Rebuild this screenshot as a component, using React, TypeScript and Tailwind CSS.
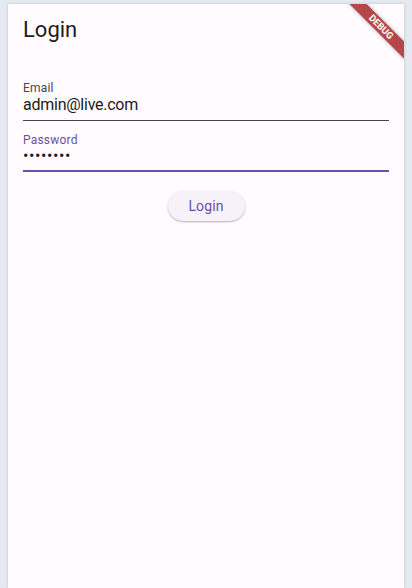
import React from "react";

export default function App() {
  return (
    <div
      className="w-[412px] h-[588px] bg-[#e5eaf2] px-[8px] pt-[4px] overflow-hidden"
      style={{ fontFamily: "Roboto, 'Noto Sans', sans-serif" }}
    >
      <div className="relative h-[584px] bg-[#fffbfe] overflow-hidden shadow-[0_0_3px_rgba(0,0,0,0.18)]">
        {/* App bar */}
        <div className="h-[56px] px-[15px] pt-[12px]">
          <div className="text-[22px] leading-[28px] text-[#1d1b20]">Login</div>
        </div>

        {/* Body */}
        <div className="px-[15px] flex flex-col">
          {/* Email field */}
          <div className="mt-[21px] border-b border-[#49454f]">
            <div className="h-[14px] text-[12px] leading-[14px] text-[#49454f] tracking-[0.2px]">Email</div>
            <div className="h-[16px] mt-[2px] text-[16px] leading-[16px] text-[#1d1b20] tracking-[-0.25px]">admin@live.com</div>
            <div className="h-[7px]" />
          </div>

          {/* Password field */}
          <div className="mt-[12px] border-b-2 border-[#6750a4]">
            <div className="h-[14px] text-[12px] leading-[14px] text-[#6750a4] tracking-[0.2px]">Password</div>
            <div className="h-[16px] mt-[1px] text-[16px] leading-[16px] text-[#1d1b20] tracking-[0.6px]">••••••••</div>
            <div className="h-[6px]" />
          </div>

          {/* Button */}
          <div className="mt-[19px] flex justify-center">
            <button className="h-[30px] w-[77px] rounded-full bg-[#f7f2fa] text-[#6750a4] text-[14px] font-normal tracking-[0.1px] shadow-[0_1px_2px_rgba(0,0,0,0.3)]">
              Login
            </button>
          </div>
        </div>

        {/* Debug banner */}
        <div className="absolute right-[-17px] top-[17px] w-[80px] h-[12px] rotate-45 bg-[#b5474a] shadow-[0_0_4px_rgba(0,0,0,0.35)] flex items-center justify-center">
          <span className="text-[9.5px] leading-[9.5px] font-bold text-white">DEBUG</span>
        </div>
      </div>
    </div>
  );
}
